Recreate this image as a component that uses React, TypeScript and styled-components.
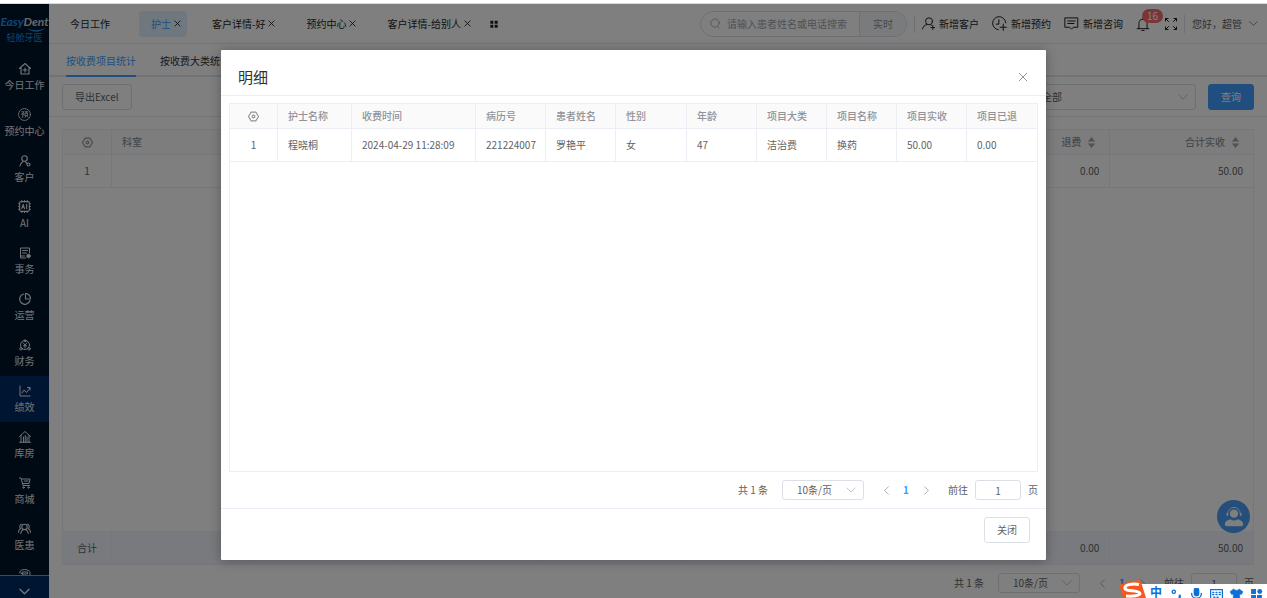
import React from "react";
import styled, { createGlobalStyle, css } from "styled-components";

const GlobalStyle = createGlobalStyle`
  *, *::before, *::after { box-sizing: border-box; }
  body {
    margin: 0;
    background: #fff;
    color: #606266;
    font-family: "Noto Sans CJK SC", sans-serif;
    font-size: 10px;
    line-height: 14px;
  }
  button, input, select { font: inherit; color: inherit; margin: 0; }
  button { cursor: pointer; }
`;

/* ---------- icons ---------- */

const Svg = styled.svg<{ $size?: number; $stroke?: number }>`
  width: ${(p) => p.$size ?? 12}px;
  height: ${(p) => p.$size ?? 12}px;
  flex: none;
  display: block;
  fill: none;
  stroke: currentColor;
  stroke-width: ${(p) => p.$stroke ?? 2};
  stroke-linecap: round;
  stroke-linejoin: round;
`;

type IconProps = { size?: number; stroke?: number; children?: React.ReactNode };
const Icon = ({ size, stroke, children }: IconProps) => (
  <Svg viewBox="0 0 24 24" $size={size} $stroke={stroke} aria-hidden="true">
    {children}
  </Svg>
);

const CloseIcon = ({ size = 7, stroke = 3 }: IconProps) => (
  <Icon size={size} stroke={stroke}><path d="M3 3l18 18M21 3L3 21" /></Icon>
);
const ChevronDown = ({ size = 10, stroke = 2 }: IconProps) => (
  <Icon size={size} stroke={stroke}><path d="M2 7l10 10L22 7" /></Icon>
);
const ChevronLeft = () => <Icon size={9} stroke={2.5}><path d="M17 2L7 12l10 10" /></Icon>;
const ChevronRight = () => <Icon size={9} stroke={2.5}><path d="M7 2l10 10L7 22" /></Icon>;
const HexIcon = () => (
  <Icon size={11} stroke={2.5}>
    <path d="M7 2.500h10L23 12l-6 9.500H7L1 12z" />
    <circle cx="12" cy="12" r="3" />
  </Icon>
);
const GridIcon = () => (
  <Icon size={8} stroke={0}>
    <path fill="currentColor" d="M1 2h9v9H1zM14 2h9v9h-9zM1 14h9v9H1zM14 14h9v9h-9z" />
  </Icon>
);
const SortIcon = () => (
  <Icon size={11} stroke={0}>
    <path fill="#a0a4ac" d="M12 0l8 10H4zM12 24l8-10H4z" />
  </Icon>
);

const HomeIcon = () => (
  <Icon stroke={2.3}><path d="M1 11L12 1l11 10M4 9v13h16V9M12 10v8M8 14h8" /></Icon>
);
const BookIcon = () => (
  <Icon size={13} stroke={1.6}>
    <circle cx="12" cy="12" r="11" />
    <path d="M7 7h4l-2 3M6.500 11H11v1M9 11v6H7.500M13 7h5M15.500 7v2M13.500 9.500h4V14h-4zM14.500 15l-1.500 2M16.500 15l1.500 2" />
  </Icon>
);
const CustomerIcon = () => (
  <Icon stroke={2.3}><circle cx="11" cy="7" r="5.500" /><path d="M2 22c1-5 3-7 6-9M12 13c2 1 3 2 4 4" /><circle cx="19" cy="19" r="3" /></Icon>
);
const AiIcon = () => (
  <Icon size={13}>
    <rect x="3" y="3" width="18" height="18" rx="3" />
    <path d="M7 16l2.500-8 2.500 8M8 13.500h3M16 8v8M7 1v2M12 1v2M17 1v2M7 21v2M12 21v2M17 21v2M1 7h2M1 12h2M1 17h2M21 7h2M21 12h2M21 17h2" />
  </Icon>
);
const AffairIcon = () => (
  <Icon>
    <path d="M21 12V2H3v20h10M7 7h10M7 12h8M3 18h8" />
    <circle cx="19" cy="18" r="3.500" fill="currentColor" />
  </Icon>
);
const PieIcon = () => (
  <Icon stroke={2.3}>
    <path d="M9 2a10.500 10.500 0 1 0 13 13" />
    <path d="M13 1v11h10A10.500 10.500 0 0 0 13 1z" />
  </Icon>
);
const MoneyIcon = () => (
  <Icon>
    <circle cx="12" cy="12" r="9" /><circle cx="12" cy="3.500" r="2" />
    <circle cx="4" cy="19.500" r="2.500" /><circle cx="20" cy="19.500" r="2.500" />
    <path d="M8.500 8l3.500 4 3.500-4M12 12v6M9 13.500h6" />
  </Icon>
);
const ChartIcon = () => (
  <Icon><path d="M2 2v20h20M6 16l4-6 5 5 7-9M17 5h5v5" /></Icon>
);
const StoreIcon = () => (
  <Icon><path d="M1 11L12 1l11 10M4 9v13M20 9v13M1 22.500h22M9 12v10M12.500 9v13M16 12v10" /></Icon>
);
const CartIcon = () => (
  <Icon><path d="M1 2h3l4 15h13M6 4h16l-2 9H8M11 8h7" /><circle cx="9" cy="21" r="1.500" /><circle cx="19" cy="21" r="1.500" /></Icon>
);
const PatientsIcon = () => (
  <Icon size={13}>
    <circle cx="12" cy="9" r="5" /><path d="M5 21c1-4 3-6 5-7M19 21c-1-4-3-6-5-7M6 4C2 6 3 11 5 12c-2 1-4 4-4 7M18 4c4 2 3 7 1 8 2 1 4 4 4 7" />
  </Icon>
);
const CoinsIcon = () => (
  <Icon>
    <path d="M1 7c1-4 5-6 10-6s10 2 11 6v5M3 8l5 3M7 6h10v4H7zM9 13h10v6" />
  </Icon>
);

const SearchIcon = () => <Icon size={11}><circle cx="11" cy="11" r="9" /><path d="M17 19l3 3" /></Icon>;
const AddUserIcon = () => (
  <Icon size={13} stroke={1.8}><circle cx="13" cy="8" r="6.500" /><path d="M1 22c1-5 4-7 8-8M16 14l2 2M20 16v7M16.500 19.500h7" /></Icon>
);
const AddClockIcon = () => (
  <Icon size={15} stroke={1.6}><path d="M10 22A10.500 10.500 0 1 1 22 11M11 6v7H7M18 13v10M13 18h10" /></Icon>
);
const MessageIcon = () => (
  <Icon size={15} stroke={1.6}><path d="M2 3h20v15h-7l-3 3-3-3H2zM6 8h12M6 12h10" /></Icon>
);
const BellIcon = () => (
  <Icon size={14} stroke={1.7}><path d="M2 20h20M5 20V11a7 7 0 0 1 14 0v9M12 4V2M10 23h4" /></Icon>
);
const FullscreenIcon = () => (
  <Icon size={12} stroke={2}>
    <path d="M1 6V1h5M1 1l6 6M18 1h5v5M23 1l-6 6M1 18v5h5M1 23l6-6M23 18v5h-5M23 23l-6-6" />
  </Icon>
);

/* ---------- page frame ---------- */

const Page = styled.div`
  display: flex;
  flex-direction: column;
  height: 100vh;
  overflow: hidden;
`;
const TopEdge = styled.div`
  flex: none;
  height: 4px;
  border-bottom: 1px solid #d8d8d8;
`;
const Shell = styled.div`
  position: relative;
  flex: 1;
  min-height: 0;
  display: flex;
`;

/* ---------- sidebar ---------- */

const Sidebar = styled.aside`
  flex: none;
  width: 49px;
  display: flex;
  flex-direction: column;
  background: #001529;
  color: #e4e8f0;
`;
const Brand = styled.div`
  position: relative;
  flex: none;
  height: 50px;
  padding-top: 9px;
  display: flex;
  flex-direction: column;
  align-items: center;
  white-space: nowrap;
`;
const BrandName = styled.div`
  font: italic bold 12px/18px Lato, sans-serif;
  color: #c8ccd6;
  span { color: #1d8fe8; }
`;
const BrandSub = styled.div`
  font-size: 9px;
  line-height: 14px;
  color: #1a8ae0;
`;
const Swoosh = styled.svg`
  position: absolute;
  left: 27px;
  top: 24px;
  width: 18px;
  height: 4px;
  fill: #1d8fe8;
`;
const Menu = styled.nav`
  flex: 1;
  min-height: 0;
  overflow: hidden;
  border-bottom: 1px solid #8a94a8;
`;
const MenuLink = styled.a<{ $active?: boolean }>`
  height: 46px;
  display: flex;
  flex-direction: column;
  align-items: center;
  justify-content: center;
  gap: 3px;
  color: inherit;
  text-decoration: none;
  white-space: nowrap;
  background: ${(p) => (p.$active ? "#002a62" : "transparent")};
`;
const MenuIcon = styled.span`
  height: 13px;
  display: flex;
  align-items: center;
`;
const MenuText = styled.span`
  height: 14px;
`;
const MoreButton = styled.button`
  flex: none;
  height: 22px;
  padding: 8px 0 0;
  border: 0;
  display: flex;
  align-items: center;
  justify-content: center;
  background: #002a62;
`;

/* ---------- header ---------- */

const Main = styled.main`
  flex: 1;
  min-width: 0;
  display: flex;
  flex-direction: column;
`;
const Header = styled.header`
  flex: none;
  height: 40px;
  padding: 0 9px;
  display: flex;
  align-items: center;
  justify-content: space-between;
  border-bottom: 1px solid #e8e8e8;
  color: #1c1e22;
`;
const HeaderGroup = styled.div`
  display: flex;
  align-items: center;
  white-space: nowrap;
`;
const PageTabs = styled(HeaderGroup)`
  gap: 13px;
`;
const PageTab = styled.div<{ $active?: boolean; $fixed?: boolean }>`
  height: 26px;
  padding: 0 ${(p) => (p.$fixed ? 16 : 6)}px 0 12px;
  display: flex;
  align-items: center;
  gap: 3px;
  border-radius: 3px;
  background: ${(p) => (p.$active ? "#e0f0ff" : "transparent")};
  a { color: ${(p) => (p.$active ? "#409eff" : "inherit")}; text-decoration: none; }
`;
const IconButton = styled.button`
  padding: 0;
  border: 0;
  background: none;
  display: flex;
  align-items: center;
  justify-content: center;
`;
const Search = styled.div`
  width: 207px;
  height: 26px;
  display: flex;
  align-items: center;
  border: 1px solid #dcdfe6;
  border-radius: 13px;
  overflow: hidden;
  color: #a8abb2;
  padding-left: 9px;
`;
const SearchInput = styled.input`
  flex: 1;
  min-width: 0;
  padding: 0 0 0 6px;
  border: 0;
  background: none;
  &::placeholder { color: #a0a3aa; opacity: 1; }
`;
const SearchMode = styled.button`
  align-self: stretch;
  width: 47px;
  padding: 0;
  border: 0;
  border-left: 1px solid #dcdfe6;
  background: #f5f7fa;
  color: #909399;
`;
const Divider = styled.span`
  width: 1px;
  height: 18px;
  margin: 0 7px;
  background: #dcdfe6;
`;
const Action = styled(IconButton)`
  gap: 4px;
  margin-right: 13px;
`;
const Bell = styled(IconButton)`
  position: relative;
  width: 14px;
  margin-right: 15px;
`;
const Badge = styled.span`
  position: absolute;
  left: 6px;
  top: -8px;
  width: 21px;
  height: 14px;
  border-radius: 7px;
  background: #f56c6c;
  color: #fff;
  text-align: center;
`;
const UserMenu = styled(IconButton)`
  gap: 7px;
  color: #606266;
`;

/* ---------- report ---------- */

const ReportTabs = styled.div`
  flex: none;
  height: 33px;
  padding: 0 17px;
  display: flex;
  gap: 24px;
  border-bottom: 2px solid #e4e7ed;
`;
const ReportTab = styled.a<{ $active?: boolean }>`
  height: 33px;
  line-height: 34px;
  text-decoration: none;
  color: ${(p) => (p.$active ? "#409eff" : "#303133")};
  border-bottom: 2px solid ${(p) => (p.$active ? "#409eff" : "transparent")};
`;
const Toolbar = styled.div`
  flex: none;
  height: 40px;
  padding: 0 13px;
  display: flex;
  align-items: center;
  justify-content: space-between;
  border-bottom: 1px solid #e8e8e8;
`;
const Filters = styled.div`
  display: flex;
  gap: 12px;
`;
const Button = styled.button<{ $primary?: boolean }>`
  height: 26px;
  padding: 0 12px;
  border: 1px solid #dcdfe6;
  border-radius: 3px;
  background: #fff;
  ${(p) => p.$primary && css`
    border-color: #409eff;
    background: #409eff;
    color: #fff;
  `}
`;
const SelectBox = styled.div<{ $width: number; $height: number }>`
  position: relative;
  width: ${(p) => p.$width}px;
  height: ${(p) => p.$height}px;
  color: #b4b8c0;
  svg { position: absolute; right: 8px; top: calc(50% - 5px); pointer-events: none; }
`;
const NativeSelect = styled.select<{ $pad: number }>`
  appearance: none;
  width: 100%;
  height: 100%;
  padding: 0 20px 0 ${(p) => p.$pad}px;
  border: 1px solid #dcdfe6;
  border-radius: 3px;
  background: transparent;
  color: #606266;
`;

/* ---------- tables ---------- */

const TableFrame = styled.div`
  flex: 1;
  min-height: 0;
  display: flex;
  flex-direction: column;
  justify-content: space-between;
  border: 1px solid #ebeef5;
`;
const ReportFrame = styled(TableFrame)`
  margin: 12px 13px 8px;
`;
const Table = styled.table`
  width: 100%;
  table-layout: fixed;
  border-collapse: separate;
  border-spacing: 0;
`;
const cell = css<{ $align?: string }>`
  padding: 0 10px;
  text-align: ${(p) => p.$align ?? "left"};
  white-space: nowrap;
  border-right: 1px solid #ebeef5;
  border-bottom: 1px solid #ebeef5;
  &:last-child { border-right: 0; }
`;
const Th = styled.th<{ $align?: string }>`
  ${cell}
  height: 25px;
  background: #fafafa;
  color: #909399;
  font-weight: 500;
  svg { margin: 0 auto; }
`;
const Td = styled.td<{ $align?: string; $total?: boolean }>`
  ${cell}
  height: 33px;
  ${(p) => p.$total && css`
    background: #f0f4fa;
    border-bottom: 0;
  `}
`;
const SortLabel = styled.span`
  display: flex;
  align-items: center;
  justify-content: flex-end;
  gap: 5px;
  padding-right: 2px;
  svg { margin: 0; }
`;

/* ---------- pager ---------- */

const PagerBar = styled.div`
  flex: none;
  height: 20px;
  display: flex;
  align-items: center;
  justify-content: flex-end;
  white-space: nowrap;
`;
const Total = styled.span`
  margin-right: 14px;
`;
const PageButtons = styled.div`
  display: flex;
  margin: 0 12px;
`;
const PageButton = styled.button<{ $current?: boolean }>`
  width: 20px;
  height: 20px;
  padding: 0;
  border: 0;
  background: none;
  display: flex;
  align-items: center;
  justify-content: center;
  font-weight: ${(p) => (p.$current ? 700 : 400)};
  color: ${(p) => (p.$current ? "#409eff" : "#a8abb2")};
`;
const Jump = styled.label`
  display: flex;
  align-items: center;
  gap: 7px;
`;
const JumpInput = styled.input`
  width: 46px;
  height: 20px;
  padding: 0;
  text-align: center;
  border: 1px solid #dcdfe6;
  border-radius: 3px;
  background: transparent;
`;

const Pager = () => (
  <PagerBar>
    <Total>共 1 条</Total>
    <SelectBox $width={82} $height={20}>
      <NativeSelect $pad={14} aria-label="10条/页"><option>10条/页</option></NativeSelect>
      <ChevronDown />
    </SelectBox>
    <PageButtons>
      <PageButton><ChevronLeft /></PageButton>
      <PageButton $current>1</PageButton>
      <PageButton><ChevronRight /></PageButton>
    </PageButtons>
    <Jump>前往<JumpInput defaultValue="1" />页</Jump>
  </PagerBar>
);
const ReportPager = styled.div`
  flex: none;
  padding: 0 13px 5px;
`;

/* ---------- floating pieces ---------- */

const Support = styled.button`
  position: absolute;
  right: 17px;
  bottom: 65px;
  width: 33px;
  height: 33px;
  padding: 0;
  border: 0;
  border-radius: 50%;
  background: #4a9cf5;
  color: #fff;
  display: flex;
  align-items: center;
  justify-content: center;
`;
const Overlay = styled.div`
  position: absolute;
  inset: 0;
  padding: 46px 221px 38px;
  display: flex;
  background: rgba(0, 0, 0, 0.5);
`;
const Dialog = styled.section`
  flex: 1;
  min-width: 0;
  display: flex;
  flex-direction: column;
  background: #fff;
  border-radius: 1px;
  box-shadow: 0 1px 12px rgba(0, 0, 0, 0.3);
`;
const DialogHeader = styled.div`
  flex: none;
  height: 46px;
  padding: 8px 18px 0 17px;
  display: flex;
  align-items: center;
  justify-content: space-between;
  border-bottom: 1px solid #ebeef5;
  color: #909399;
`;
const DialogTitle = styled.h2`
  margin: 0;
  font-size: 15px;
  line-height: 20px;
  font-weight: 400;
  color: #303133;
`;
const DialogBody = styled.div`
  flex: 1;
  min-height: 0;
  padding: 7px 8px 8px;
  display: flex;
  flex-direction: column;
  gap: 8px;
`;
const DialogFooter = styled.div`
  flex: none;
  height: 52px;
  padding: 8px 16px 0;
  border-top: 1px solid #ebeef5;
  text-align: right;
`;
const InputBar = styled.div`
  position: absolute;
  right: 0;
  bottom: 0;
  display: flex;
  align-items: flex-end;
`;
const InputTools = styled.div`
  height: 14px;
  padding: 2px 4px 0 10px;
  display: flex;
  align-items: flex-start;
  gap: 7px;
  background: #fff;
  color: #0f6fd6;
  overflow: hidden;
  svg { margin-top: 2px; }
`;
const ToolGlyph = styled.span`
  width: 13px;
  font-size: 12px;
  line-height: 12px;
  font-weight: 700;
`;
const SogouMark = styled.svg`
  position: relative;
  width: 27px;
  height: 18px;
  display: block;
  margin-right: -6px;
`;

const menu: { label: string; icon: React.ReactNode }[] = [
  { label: "今日工作", icon: <HomeIcon /> },
  { label: "预约中心", icon: <BookIcon /> },
  { label: "客户", icon: <CustomerIcon /> },
  { label: "AI", icon: <AiIcon /> },
  { label: "事务", icon: <AffairIcon /> },
  { label: "运营", icon: <PieIcon /> },
  { label: "财务", icon: <MoneyIcon /> },
  { label: "绩效", icon: <ChartIcon /> },
  { label: "库房", icon: <StoreIcon /> },
  { label: "商城", icon: <CartIcon /> },
  { label: "医患", icon: <PatientsIcon /> },
  { label: "", icon: <CoinsIcon /> },
];

const pageTabs = ["今日工作", "护士", "客户详情-好", "预约中心", "客户详情-给别人"];

const detailColumns: [string, number, string][] = [
  ["护士名称", 74, "程晓桐"],
  ["收费时间", 124, "2024-04-29 11:28:09"],
  ["病历号", 70, "221224007"],
  ["患者姓名", 70, "罗艳平"],
  ["性别", 71, "女"],
  ["年龄", 70, "47"],
  ["项目大类", 70, "洁治费"],
  ["项目名称", 70, "换药"],
  ["项目实收", 70, "50.00"],
  ["项目已退", 70, "0.00"],
];

const ReportCols = () => (
  <colgroup>
    <col width={49} />
    {Array.from({ length: 8 }, (_, i) => <col key={i} />)}
  </colgroup>
);
const blanks = (from: string) =>
  Array.from({ length: 5 }, (_, i) => (from === "th" ? <Th key={i} /> : <Td key={i} $total={from === "total"} />));

export default function App() {
  return (
    <Page>
      <GlobalStyle />
      <TopEdge />
      <Shell>
        <Sidebar>
          <Brand>
            <BrandName><span>Easy</span>Dent</BrandName>
            <BrandSub>轻舱牙医</BrandSub>
            <Swoosh viewBox="0 0 18 4" aria-hidden="true"><path d="M0 0c5 3 12 3 18 0-5 5-13 5-18 0z" /></Swoosh>
          </Brand>
          <Menu>
            {menu.map((m, i) => (
              <MenuLink key={i} href="#" $active={m.label === "绩效"}>
                <MenuIcon>{m.icon}</MenuIcon>
                <MenuText>{m.label}</MenuText>
              </MenuLink>
            ))}
          </Menu>
          <MoreButton><ChevronDown size={11} stroke={3} /></MoreButton>
        </Sidebar>

        <Main>
          <Header>
            <PageTabs>
              {pageTabs.map((t, i) => (
                <PageTab key={t} $active={i === 1} $fixed={i === 0}>
                  <a href="#">{t}</a>
                  {i > 0 && <IconButton><CloseIcon /></IconButton>}
                </PageTab>
              ))}
              <IconButton><GridIcon /></IconButton>
            </PageTabs>
            <HeaderGroup>
              <Search>
                <SearchIcon />
                <SearchInput placeholder="请输入患者姓名或电话搜索" />
                <SearchMode>实时</SearchMode>
              </Search>
              <Divider />
              <Action><AddUserIcon />新增客户</Action>
              <Action><AddClockIcon />新增预约</Action>
              <Action><MessageIcon />新增咨询</Action>
              <Bell><BellIcon /><Badge>16</Badge></Bell>
              <IconButton><FullscreenIcon /></IconButton>
              <Divider />
              <UserMenu>您好，超管<ChevronDown size={9} /></UserMenu>
            </HeaderGroup>
          </Header>

          <ReportTabs>
            <ReportTab href="#" $active>按收费项目统计</ReportTab>
            <ReportTab href="#">按收费大类统计</ReportTab>
          </ReportTabs>

          <Toolbar>
            <Button>导出Excel</Button>
            <Filters>
              <SelectBox $width={164} $height={26}>
                <NativeSelect $pad={9} aria-label="全部"><option>全部</option></NativeSelect>
                <ChevronDown />
              </SelectBox>
              <Button $primary>查询</Button>
            </Filters>
          </Toolbar>

          <ReportFrame>
            <Table>
              <ReportCols />
              <thead>
                <tr>
                  <Th><HexIcon /></Th>
                  <Th>科室</Th>
                  {blanks("th")}
                  <Th><SortLabel>退费<SortIcon /></SortLabel></Th>
                  <Th><SortLabel>合计实收<SortIcon /></SortLabel></Th>
                </tr>
              </thead>
              <tbody>
                <tr>
                  <Td $align="center">1</Td>
                  <Td />
                  {blanks("td")}
                  <Td $align="right">0.00</Td>
                  <Td $align="right">50.00</Td>
                </tr>
              </tbody>
            </Table>
            <Table>
              <ReportCols />
              <tbody>
                <tr>
                  <Td $total $align="center">合计</Td>
                  <Td $total />
                  {blanks("total")}
                  <Td $total $align="right">0.00</Td>
                  <Td $total $align="right">50.00</Td>
                </tr>
              </tbody>
            </Table>
          </ReportFrame>
          <ReportPager><Pager /></ReportPager>
        </Main>

        <Support aria-label="客服">
          <Icon size={20} stroke={1.5}>
            <circle cx="12" cy="8" r="5" fill="currentColor" stroke="none" />
            <path d="M4.500 8a7.500 7.500 0 0 1 15 0" strokeWidth="1" />
            <path d="M4 8v2M20 8v2" strokeWidth="2" />
            <path d="M1 21c0-4 4-6 7-6 2.500 1.500 5.500 1.500 8 0 3 0 7 2 7 6 0 1-1 2-2 2H3c-1 0-2-1-2-2z" fill="currentColor" stroke="none" />
          </Icon>
        </Support>

        <Overlay>
          <Dialog role="dialog" aria-labelledby="detail-title">
            <DialogHeader>
              <DialogTitle id="detail-title">明细</DialogTitle>
              <IconButton aria-label="关闭"><CloseIcon size={10} stroke={2.4} /></IconButton>
            </DialogHeader>
            <DialogBody>
              <TableFrame>
                <Table>
                  <colgroup>
                    <col width={48} />
                    {detailColumns.map(([name, w]) => <col key={name} width={w} />)}
                  </colgroup>
                  <thead>
                    <tr>
                      <Th><HexIcon /></Th>
                      {detailColumns.map(([name]) => <Th key={name}>{name}</Th>)}
                    </tr>
                  </thead>
                  <tbody>
                    <tr>
                      <Td $align="center">1</Td>
                      {detailColumns.map(([name, , value]) => <Td key={name}>{value}</Td>)}
                    </tr>
                  </tbody>
                </Table>
              </TableFrame>
              <Pager />
            </DialogBody>
            <DialogFooter><Button>关闭</Button></DialogFooter>
          </Dialog>
        </Overlay>

        <InputBar>
          <SogouMark viewBox="0 0 27 18" aria-hidden="true">
            <path d="M1 7Q0 5 2 4L19 0Q21 0 22 2L27 18H4z" fill="#f4581e" />
            <path d="M20 4.500C13 3 5 5 6 8.500c1 3.500 14 1 15 5 0 2-6 3-14 2.500" fill="none" stroke="#fff" strokeWidth="3" />
          </SogouMark>
          <InputTools>
            <ToolGlyph>中</ToolGlyph>
            <Icon size={13} stroke={2.5}>
              <circle cx="7" cy="7" r="3" /><path d="M18 14v3l-2 4" strokeWidth="4" />
            </Icon>
            <Icon size={13} stroke={2.5}>
              <rect x="8" y="0" width="8" height="14" rx="4" fill="currentColor" /><path d="M3 10c0 12 18 12 18 0M12 19v5" />
            </Icon>
            <Icon size={13} stroke={2.5}>
              <rect x="1" y="3" width="22" height="18" /><path d="M5 8h14M5 12h14M7 17h10" strokeDasharray="2 4" />
            </Icon>
            <Icon size={13} stroke={1}>
              <path fill="currentColor" d="M7 2c2 3 8 3 10 0l7 5-3 5-3-1v12H6V11l-3 1-3-5z" />
            </Icon>
            <Icon size={13} stroke={0}>
              <path fill="currentColor" d="M2 2h9v9H2zM2 13h9v9H2zM13 13h9v9h-9z" />
              <circle cx="18" cy="6.500" r="4.500" fill="currentColor" />
            </Icon>
          </InputTools>
        </InputBar>
      </Shell>
    </Page>
  );
}
